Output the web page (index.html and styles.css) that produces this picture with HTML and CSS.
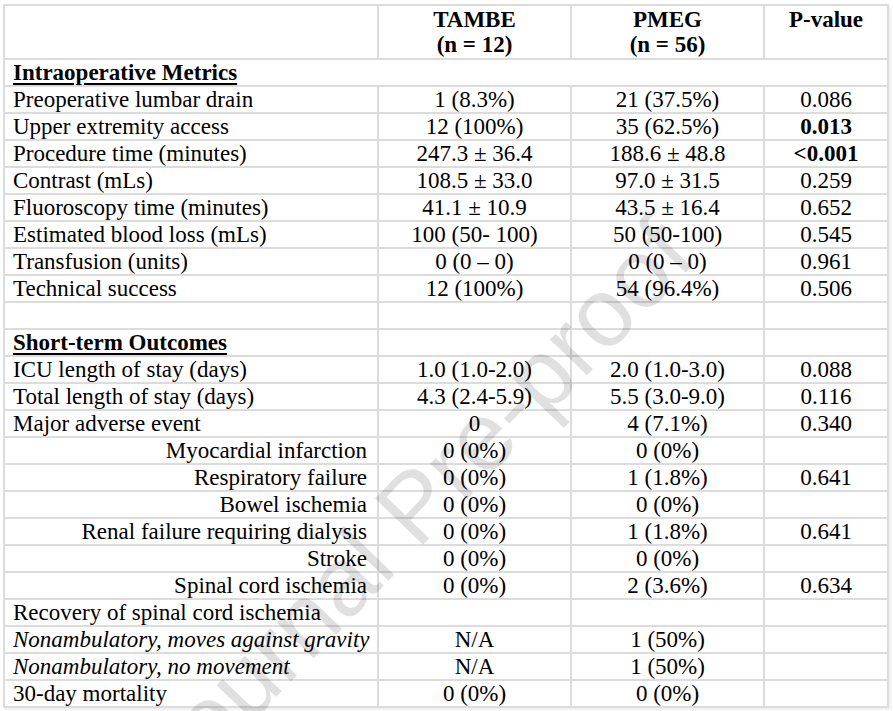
FILE: index.html
```html
<!DOCTYPE html>
<html lang="en">
<head>
<meta charset="utf-8">
<title>Outcomes table</title>
<link rel="stylesheet" href="styles.css">
</head>
<body>
<div class="page">
  <table class="data">
    <colgroup>
      <col class="c-label">
      <col class="c-grp">
      <col class="c-grp">
      <col class="c-p">
    </colgroup>
    <thead>
      <tr class="head">
        <th></th>
        <th>TAMBE<br>(n = 12)</th>
        <th>PMEG<br>(n = 56)</th>
        <th>P-value</th>
      </tr>
    </thead>
    <tbody>
      <tr><td class="section" colspan="4">Intraoperative Metrics</td></tr>
      <tr><td>Preoperative lumbar drain</td><td>1 (8.3%)</td><td>21 (37.5%)</td><td>0.086</td></tr>
      <tr><td>Upper extremity access</td><td>12 (100%)</td><td>35 (62.5%)</td><td class="sig">0.013</td></tr>
      <tr><td>Procedure time (minutes)</td><td>247.3 ± 36.4</td><td>188.6 ± 48.8</td><td class="sig">&lt;0.001</td></tr>
      <tr><td>Contrast (mLs)</td><td>108.5 ± 33.0</td><td>97.0 ± 31.5</td><td>0.259</td></tr>
      <tr><td>Fluoroscopy time (minutes)</td><td>41.1 ± 10.9</td><td>43.5 ± 16.4</td><td>0.652</td></tr>
      <tr><td>Estimated blood loss (mLs)</td><td>100 (50- 100)</td><td>50 (50-100)</td><td>0.545</td></tr>
      <tr><td>Transfusion (units)</td><td>0 (0 – 0)</td><td>0 (0 – 0)</td><td>0.961</td></tr>
      <tr><td>Technical success</td><td>12 (100%)</td><td>54 (96.4%)</td><td>0.506</td></tr>
      <tr><td></td><td></td><td></td><td></td></tr>
      <tr><td class="section">Short-term Outcomes</td><td></td><td></td><td></td></tr>
      <tr><td>ICU length of stay (days)</td><td>1.0 (1.0-2.0)</td><td>2.0 (1.0-3.0)</td><td>0.088</td></tr>
      <tr><td>Total length of stay (days)</td><td>4.3 (2.4-5.9)</td><td>5.5 (3.0-9.0)</td><td>0.116</td></tr>
      <tr><td>Major adverse event</td><td>0</td><td>4 (7.1%)</td><td>0.340</td></tr>
      <tr><td class="sub">Myocardial infarction</td><td>0 (0%)</td><td>0 (0%)</td><td></td></tr>
      <tr><td class="sub">Respiratory failure</td><td>0 (0%)</td><td>1 (1.8%)</td><td>0.641</td></tr>
      <tr><td class="sub">Bowel ischemia</td><td>0 (0%)</td><td>0 (0%)</td><td></td></tr>
      <tr><td class="sub">Renal failure requiring dialysis</td><td>0 (0%)</td><td>1 (1.8%)</td><td>0.641</td></tr>
      <tr><td class="sub">Stroke</td><td>0 (0%)</td><td>0 (0%)</td><td></td></tr>
      <tr><td class="sub">Spinal cord ischemia</td><td>0 (0%)</td><td>2 (3.6%)</td><td>0.634</td></tr>
      <tr><td>Recovery of spinal cord ischemia</td><td></td><td></td><td></td></tr>
      <tr><td class="em">Nonambulatory, moves against gravity</td><td>N/A</td><td>1 (50%)</td><td></td></tr>
      <tr><td class="em">Nonambulatory, no movement</td><td>N/A</td><td>1 (50%)</td><td></td></tr>
      <tr><td>30-day mortality</td><td>0 (0%)</td><td>0 (0%)</td><td></td></tr>
    </tbody>
  </table>
  <div class="watermark" aria-hidden="true">Journal Pre-proof</div>
</div>
</body>
</html>
```

FILE: styles.css
```css
html, body {
  margin: 0;
  padding: 0;
  background: #ffffff;
}

body {
  font-family: "Liberation Serif", "Times New Roman", serif;
  color: #000000;
  overflow: hidden;
}

.page {
  position: relative;
  width: 893px;
  height: 711px;
  padding: 4px 0 0 3px;
  box-sizing: border-box;
  overflow: hidden;
}

.data {
  border-collapse: collapse;
  table-layout: fixed;
  width: 886px;
  font-size: 23px;
  box-shadow: 2px 2px 3px rgba(0, 0, 0, 0.07);
}

.c-label { width: 374px; }
.c-grp { width: 193px; }
.c-p { width: 124px; }

.data th,
.data td {
  border: 2px solid #dcdcdc;
  padding: 0;
  text-align: center;
  white-space: nowrap;
  overflow: hidden;
}

.data td {
  height: 25px;
  line-height: 25px;
  vertical-align: top;
}

.data th {
  height: 51px;
  line-height: 25px;
  font-weight: bold;
  vertical-align: top;
  padding-top: 1px;
}

.data td:first-child {
  text-align: left;
  padding-left: 8px;
}

.data td.sub {
  text-align: right;
  padding-left: 0;
  padding-right: 10px;
}

.data td.em {
  font-style: italic;
}

.data td.section {
  font-weight: bold;
  text-decoration: underline;
  text-decoration-thickness: 2px;
  text-underline-offset: 3px;
}

.data td.sig {
  font-weight: bold;
}

.watermark {
  position: absolute;
  left: 414px;
  top: 506px;
  transform: translate(-50%, -50%) rotate(-46deg);
  font-family: "Liberation Sans", Arial, sans-serif;
  font-size: 97px;
  line-height: 1;
  white-space: nowrap;
  color: rgba(0, 0, 0, 0.12);
  pointer-events: none;
}
```
